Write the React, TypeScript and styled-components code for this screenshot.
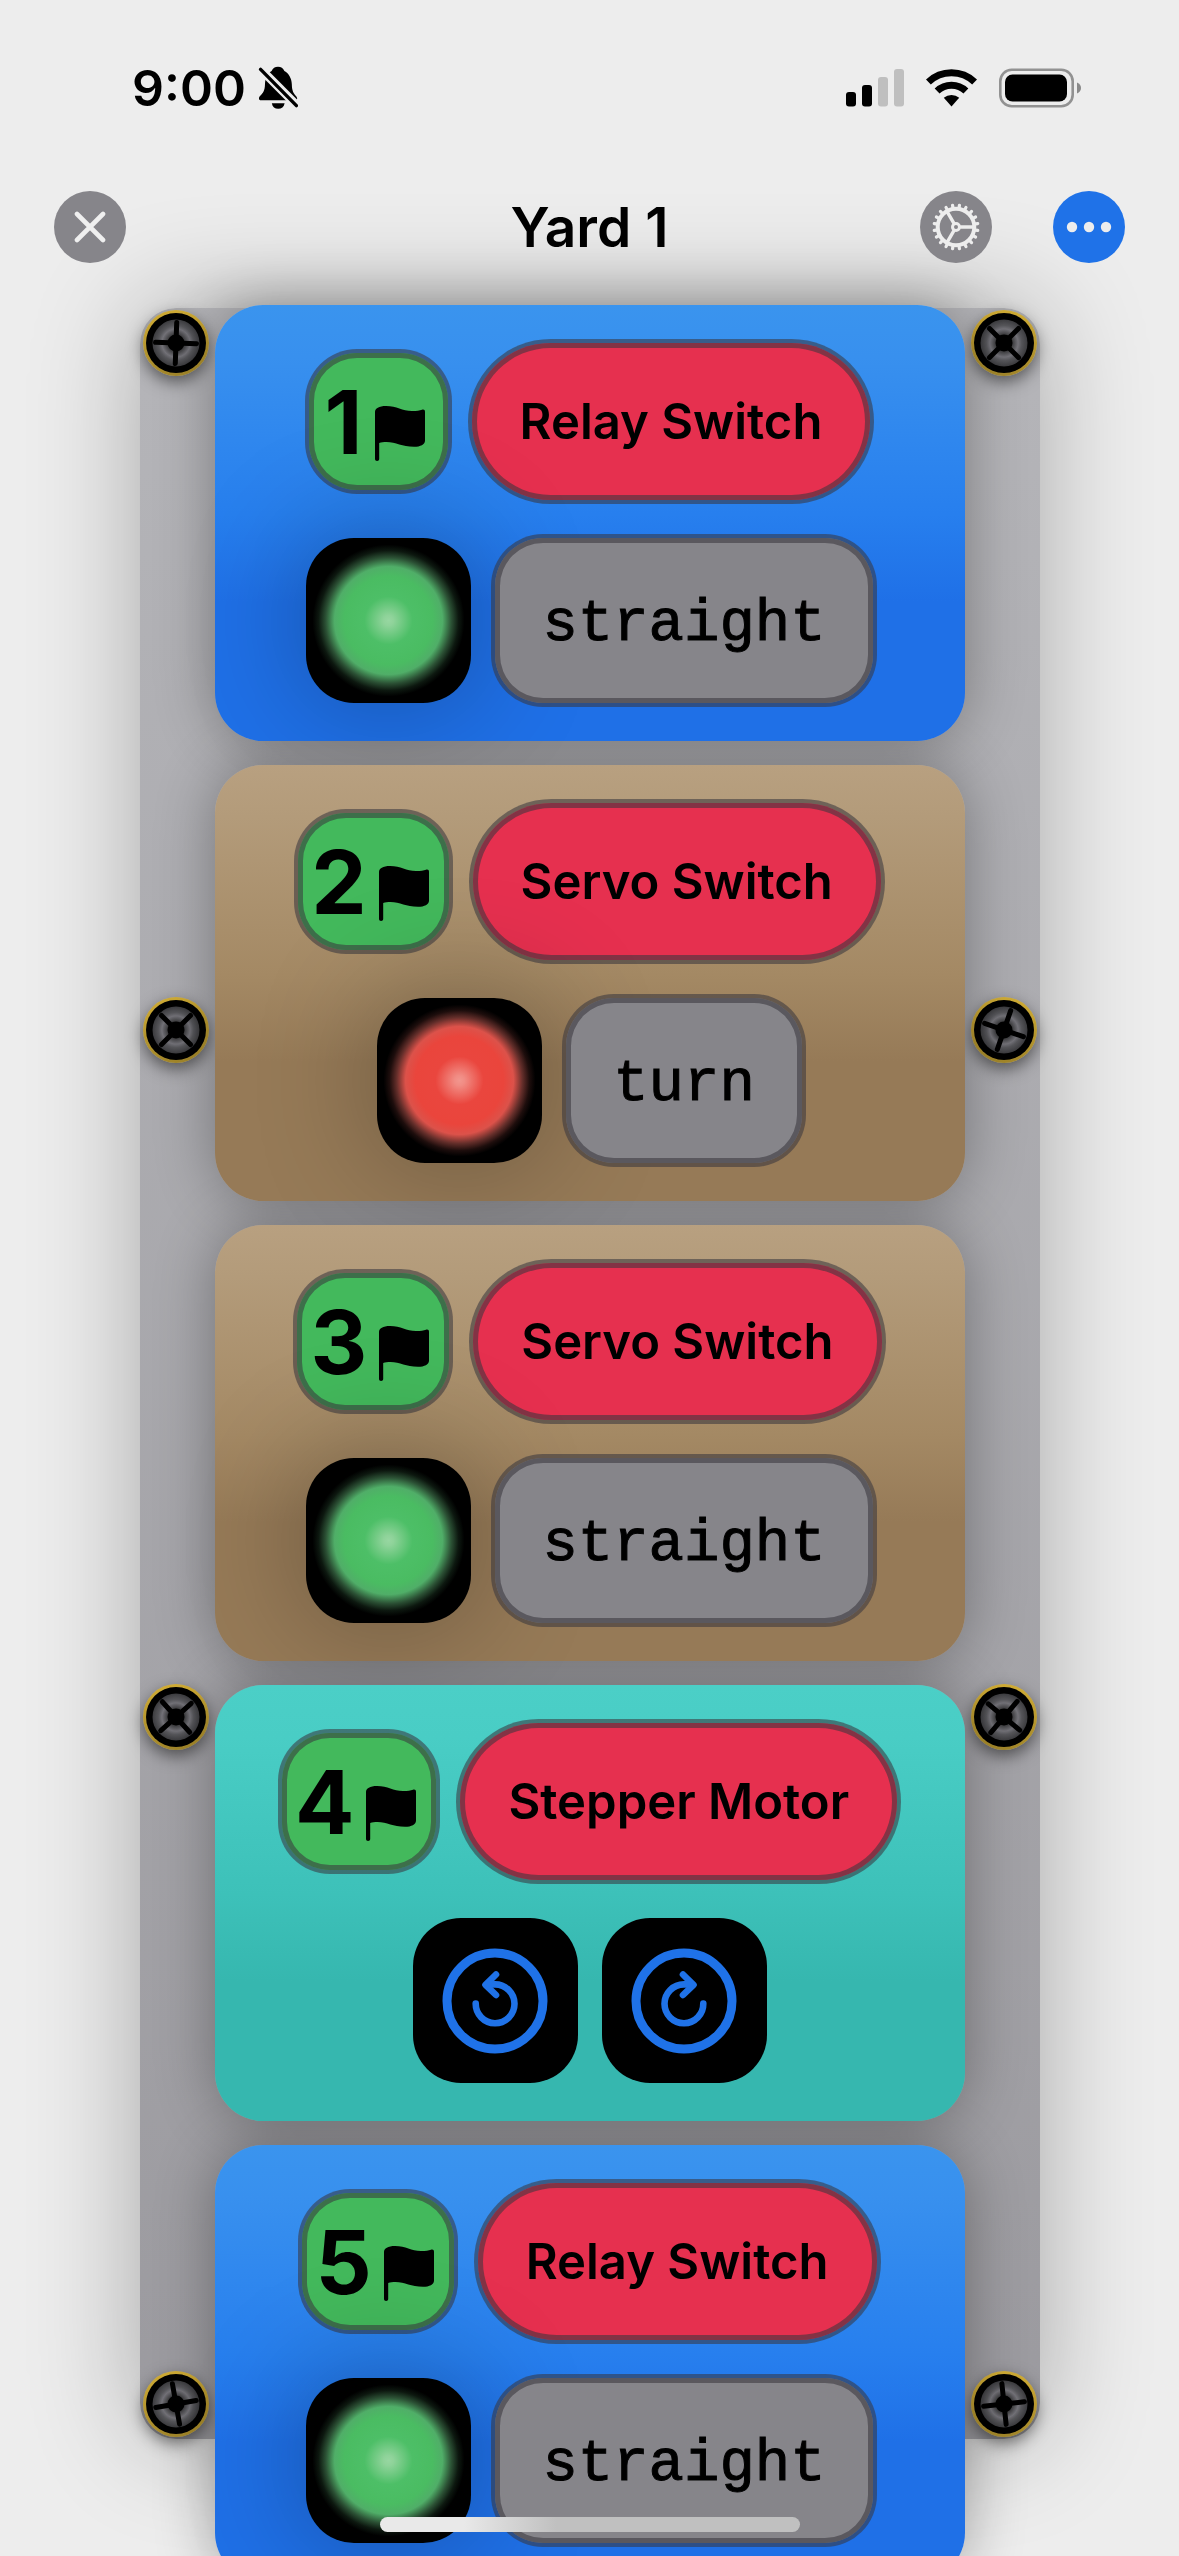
import React from "react";
import styled, { createGlobalStyle, css } from "styled-components";

const GlobalStyle = createGlobalStyle`
  *, *::before, *::after { box-sizing: border-box; }
  body { margin: 0; background: #ededed; }
  button { margin: 0; padding: 0; border: 0; font: inherit; color: inherit; cursor: pointer; }
  svg { display: block; flex: none; }
`;

const BLUE = "#1f72e8";
const GRAY = "#86858a";
const PAPER = "#ededed";
const STROKE = "rgba(56, 54, 62, 0.57)";

const Page = styled.div`
  position: relative;
  display: flex;
  flex-direction: column;
  height: 100vh;
  overflow: hidden;
  background: ${PAPER};
  color: #000;
  font-family: Inter, "Liberation Sans", sans-serif;
`;

/* ---------- status bar ---------- */

const StatusBar = styled.div`
  flex: none;
  display: flex;
  align-items: center;
  justify-content: space-between;
  height: 176px;
  padding: 0 98px 0 132px;
`;

const StatusGroup = styled.div<{ $gap: number }>`
  display: flex;
  align-items: center;
  gap: ${(p) => p.$gap}px;
`;

const Clock = styled.time`
  font-size: 50px;
  font-weight: 600;
  line-height: 60px;
`;

/* ---------- navigation bar ---------- */

const NavBar = styled.header`
  position: relative;
  z-index: 1;
  flex: none;
  display: grid;
  grid-template-columns: 1fr auto 1fr;
  align-items: center;
  height: 102px;
  padding: 0 54px;
`;

const NavActions = styled.div`
  display: flex;
  justify-content: flex-end;
  gap: 61px;
`;

const Title = styled.h1`
  margin: 0;
  font-size: 55px;
  font-weight: 600;
  line-height: 64px;
`;

const RoundButton = styled.button<{ $color: string }>`
  display: flex;
  align-items: center;
  justify-content: center;
  width: 72px;
  height: 72px;
  border-radius: 50%;
  background: ${(p) => p.$color};
`;

/* ---------- board ---------- */

const Plate = styled.main`
  flex: 1 1 0;
  min-height: 0;
  display: grid;
  grid-template-columns: 66px 1fr 66px;
  grid-template-rows: minmax(0, 1fr);
  column-gap: 6px;
  width: 100%;
  max-width: 900px;
  margin: 30px auto 117px;
  padding: 2px 3px;
  border-radius: 36px;
  background: linear-gradient(#b5b5b9, #9b9a9f);
  box-shadow: 0 0 110px rgba(0, 0, 0, 0.3);
`;

const ScrewColumn = styled.div`
  display: flex;
  flex-direction: column;
  justify-content: space-between;
`;

const ScrewHead = styled.div`
  width: 66px;
  height: 66px;
  border-radius: 50%;
  box-shadow: 0 6px 16px rgba(0, 0, 0, 0.5);
`;

const ModuleList = styled.div`
  isolation: isolate;
  display: flex;
  flex-direction: column;
  gap: 24px;
  margin-top: -5px;
`;

type Tone = "relay" | "servo" | "stepper";

const toneGradient: Record<Tone, string> = {
  relay: "linear-gradient(#3a94ee, #3890ee 12%, #277fee 48%, #1f70e7 68%)",
  servo: "linear-gradient(#b8a080, #b39b7a 12%, #a48964 48%, #967a57 68%)",
  stepper: "linear-gradient(#4bcfc7, #49cdc5 12%, #3dc1b9 48%, #36b7af 68%)",
};

/* The drop shadow sits on a pseudo-element below all cards, so it never tints a neighbour. */
const Card = styled.section<{ $tone: Tone }>`
  position: relative;
  flex: none;
  display: flex;
  flex-direction: column;
  gap: 38px;
  padding: 38px 0;
  border-radius: 48px;
  background: ${(p) => toneGradient[p.$tone]};

  &::before {
    content: "";
    position: absolute;
    z-index: -1;
    inset: 0;
    border-radius: inherit;
    box-shadow: 0 0 60px rgba(0, 0, 0, 0.33);
  }
`;

const CardRow = styled.div`
  display: flex;
  align-items: center;
  justify-content: center;
  gap: 24px;
`;

const stroked = css`
  box-shadow: 0 0 0 4px ${STROKE}, inset 0 0 0 5px ${STROKE};
`;

const Tag = styled.button`
  display: flex;
  align-items: center;
  justify-content: center;
  gap: 12px;
  min-width: 139px;
  height: 137px;
  padding: 0 20px 0 13px;
  border-radius: 48px;
  background: #43b95c;
  ${stroked}
`;

const TagNumber = styled.span`
  font-size: 88px;
  font-weight: 700;
  line-height: 106px;
`;

const NamePill = styled.button`
  height: 157px;
  padding: 0 48px;
  border-radius: 79px;
  background: #e6304f;
  font-size: 49px;
  font-weight: 600;
  line-height: 60px;
  ${stroked}
`;

const StateBox = styled.button`
  height: 165px;
  padding: 8px 47px 0;
  border-radius: 48px;
  background: ${GRAY};
  font-family: "Liberation Mono", monospace;
  font-size: 59px;
  line-height: 70px;
  -webkit-text-stroke: 1px #000;
  ${stroked}
`;

const Lamp = styled.div<{ $lit: "green" | "red" }>`
  width: 165px;
  height: 165px;
  border-radius: 48px;
  background: ${(p) =>
    p.$lit === "green"
      ? "radial-gradient(circle, #97d7a1 0, #8fd39a 5px, #4dbf67 24px, #4abc62 44px, #50ae68 54px, rgba(86, 160, 104, 0.5) 63px, rgba(86, 160, 104, 0.15) 70px, rgba(86, 160, 104, 0) 76px), #000"
      : "radial-gradient(circle, #f2968e 0, #f18c84 5px, #ea463e 24px, #ea453c 44px, #dc524a 54px, rgba(200, 92, 84, 0.5) 63px, rgba(200, 92, 84, 0.15) 70px, rgba(200, 92, 84, 0) 76px), #000"};
  box-shadow: 0 0 120px rgba(0, 0, 0, 0.3);
`;

const StepButton = styled.button`
  display: flex;
  align-items: center;
  justify-content: center;
  width: 165px;
  height: 165px;
  border-radius: 48px;
  background: #000;
`;

const HomeIndicator = styled.div`
  position: absolute;
  z-index: 2;
  bottom: 24px;
  left: 50%;
  width: 420px;
  height: 15px;
  transform: translateX(-50%);
  border-radius: 8px;
  background: linear-gradient(90deg, #e9e9e9 20%, #c0c0c0 42%);
`;

/* ---------- drawings ---------- */

const BellSlash = () => (
  <svg width="40" height="44" viewBox="0 0 40 44" aria-hidden="true">
    <path d="M20 0.8C23 0.8 25.3 2.3 26.4 5C31 7.5 33.6 12.5 33.8 18C34 25 35.3 27 38 30C40 32.5 39.3 34.3 37.3 34.3H3C0.9 34.3 0.2 32 2 30C5 27 6.8 25 7 18C7.2 12.5 9.3 7.5 13.6 5C14.7 2.3 17 0.8 20 0.8Z" />
    <path d="M13.8 37.3H26.6C26 41 23.5 42.8 20.2 42.8S14.4 41 13.8 37.3Z" />
    <path d="M1 1.5L41 41.5" stroke={PAPER} strokeWidth="8.6" />
    <path d="M2.6 3.4L38.4 39.6" stroke="#000" strokeWidth="3.4" strokeLinecap="round" />
  </svg>
);

const Signal = () => (
  <svg width="58" height="38" viewBox="0 0 58 38" aria-hidden="true">
    <rect x="0" y="23" width="10" height="14.5" rx="3" />
    <rect x="16" y="16" width="10" height="21.5" rx="3" />
    <rect x="32" y="8" width="10" height="29.5" rx="3" fill="#bfbfbf" />
    <rect x="48" y="0" width="10" height="37.5" rx="3" fill="#bfbfbf" />
  </svg>
);

const Wifi = () => (
  <svg width="51" height="38" viewBox="0 0 51 38" aria-hidden="true">
    <g fill="none" stroke="#000" strokeWidth="7">
      <path d="M2.4 13A33.5 33.5 0 0 1 48.6 13" />
      <path d="M11.1 22A20.8 20.8 0 0 1 39.9 22" />
    </g>
    <path d="M25.5 37.4L17.8 28.8A11.8 11.8 0 0 1 33.2 28.8Z" />
  </svg>
);

const Battery = () => (
  <svg width="82" height="40" viewBox="0 0 82 40" aria-hidden="true">
    <rect x="1.3" y="1.8" width="72.4" height="36.4" rx="11.5" fill="none" stroke="#929292" strokeWidth="2.6" />
    <rect x="6" y="6.5" width="62" height="27" rx="7.5" />
    <path d="M78 14.5C80.6 15.5 82 17.6 82 20S80.6 24.5 78 25.5Z" fill="#8a8a8a" />
  </svg>
);

const Cross = () => (
  <svg width="32" height="32" viewBox="0 0 32 32" aria-hidden="true">
    <path d="M3 3L29 29M29 3L3 29" stroke="#efefef" strokeWidth="4.6" strokeLinecap="round" />
  </svg>
);

const Gear = () => (
  <svg width="50" height="50" viewBox="-25 -25 50 50" aria-hidden="true">
    <g fill="none" stroke={PAPER} strokeLinecap="round">
      <circle r="18.3" strokeWidth="4" />
      {Array.from({ length: 20 }, (_, i) => (
        <path key={i} d="M20 0H22" strokeWidth="3.2" transform={`rotate(${i * 18 + 9})`} />
      ))}
      <circle r="3.5" strokeWidth="3" />
      {[0, 120, 240].map((a) => (
        <path key={a} d="M5 0H17.5" strokeWidth="3.4" transform={`rotate(${a})`} />
      ))}
    </g>
  </svg>
);

const Dots = () => (
  <svg width="46" height="12" viewBox="0 0 46 12" fill={PAPER} aria-hidden="true">
    <circle cx="6" cy="6" r="5.2" />
    <circle cx="23" cy="6" r="5.2" />
    <circle cx="40" cy="6" r="5.2" />
  </svg>
);

const Flag = () => (
  <svg width="50" height="78" viewBox="0 0 50 78" aria-hidden="true">
    <path d="M0 29C0 25.500 4 23 11 23C22 23 27 28 37 28C42 28 44.500 27.600 47 26.800C48.800 26.200 50 27 50 28.800V57.500C50 61.500 45.500 63.800 39 63.800C27 63.800 21 59 11.500 59C8.500 59 6.300 59.300 4.200 60V76C4.200 77.200 3.300 78 2.100 78S0 77.200 0 76Z" />
  </svg>
);

const Rotate = ({ clockwise }: { clockwise?: boolean }) => (
  <svg width="106" height="106" viewBox="-53 -53 106 106" fill="none" stroke={BLUE} aria-hidden="true">
    <circle r="48" strokeWidth="9" />
    <g strokeWidth="6.6" strokeLinecap="round" strokeLinejoin="round" transform={clockwise ? "scale(-1 1)" : undefined}>
      <path d="M-19.300 2.500A19.400 19.400 0 1 0 0 -16.600H-7" />
      <path d="M1 -26.500L-9.500 -16.200L1 -6" />
    </g>
  </svg>
);

const Screw = ({ angle }: { angle: number }) => (
  <ScrewHead>
    <svg width="66" height="66" viewBox="-33 -33 66 66" aria-hidden="true">
      <defs>
        <linearGradient id="screw-rim" x1="0" y1="0" x2="0" y2="1">
          <stop offset="0" stopColor="#d0ac35" />
          <stop offset="1" stopColor="#a3872a" />
        </linearGradient>
        <radialGradient id="screw-face">
          <stop offset="0.35" stopColor="#3a3a3c" />
          <stop offset="0.6" stopColor="#737278" />
          <stop offset="0.75" stopColor="#56565a" />
          <stop offset="1" stopColor="#3c3c3f" />
        </radialGradient>
      </defs>
      <circle r="33" fill="url(#screw-rim)" />
      <circle r="30" fill="#000" />
      <circle r="23.500" fill="url(#screw-face)" />
      <circle r="8.500" fill="#000" />
      <path d="M0 -20.500V20.500M-20.500 0H20.500" stroke="#000" strokeWidth="5" strokeLinecap="round" transform={`rotate(${angle})`} />
    </svg>
  </ScrewHead>
);

/* ---------- data ---------- */

interface Device {
  id: number;
  name: string;
  tone: Tone;
  lamp?: "green" | "red";
  state?: string;
}

const devices: Device[] = [
  { id: 1, name: "Relay Switch", tone: "relay", lamp: "green", state: "straight" },
  { id: 2, name: "Servo Switch", tone: "servo", lamp: "red", state: "turn" },
  { id: 3, name: "Servo Switch", tone: "servo", lamp: "green", state: "straight" },
  { id: 4, name: "Stepper Motor", tone: "stepper" },
  { id: 5, name: "Relay Switch", tone: "relay", lamp: "green", state: "straight" },
];

const leftScrews = [2, 45, 48, -10];
const rightScrews = [45, 19, 40, -6];

const DeviceCard = ({ device }: { device: Device }) => (
  <Card $tone={device.tone}>
    <CardRow>
      <Tag type="button">
        <TagNumber>{device.id}</TagNumber>
        <Flag />
      </Tag>
      <NamePill type="button">{device.name}</NamePill>
    </CardRow>
    <CardRow>
      {device.lamp ? (
        <>
          <Lamp $lit={device.lamp} role="img" aria-label={device.lamp} />
          <StateBox type="button">{device.state}</StateBox>
        </>
      ) : (
        <>
          <StepButton type="button" aria-label="Counterclockwise">
            <Rotate />
          </StepButton>
          <StepButton type="button" aria-label="Clockwise">
            <Rotate clockwise />
          </StepButton>
        </>
      )}
    </CardRow>
  </Card>
);

export default function App() {
  return (
    <Page>
      <GlobalStyle />
      <StatusBar>
        <StatusGroup $gap={12}>
          <Clock>9:00</Clock>
          <BellSlash />
        </StatusGroup>
        <StatusGroup $gap={22}>
          <Signal />
          <Wifi />
          <Battery />
        </StatusGroup>
      </StatusBar>
      <NavBar>
        <RoundButton type="button" $color={GRAY} aria-label="Close">
          <Cross />
        </RoundButton>
        <Title>Yard 1</Title>
        <NavActions>
          <RoundButton type="button" $color={GRAY} aria-label="Settings">
            <Gear />
          </RoundButton>
          <RoundButton type="button" $color={BLUE} aria-label="More">
            <Dots />
          </RoundButton>
        </NavActions>
      </NavBar>
      <Plate>
        <ScrewColumn>
          {leftScrews.map((a, i) => (
            <Screw key={i} angle={a} />
          ))}
        </ScrewColumn>
        <ModuleList>
          {devices.map((d) => (
            <DeviceCard key={d.id} device={d} />
          ))}
        </ModuleList>
        <ScrewColumn>
          {rightScrews.map((a, i) => (
            <Screw key={i} angle={a} />
          ))}
        </ScrewColumn>
      </Plate>
      <HomeIndicator />
    </Page>
  );
}
